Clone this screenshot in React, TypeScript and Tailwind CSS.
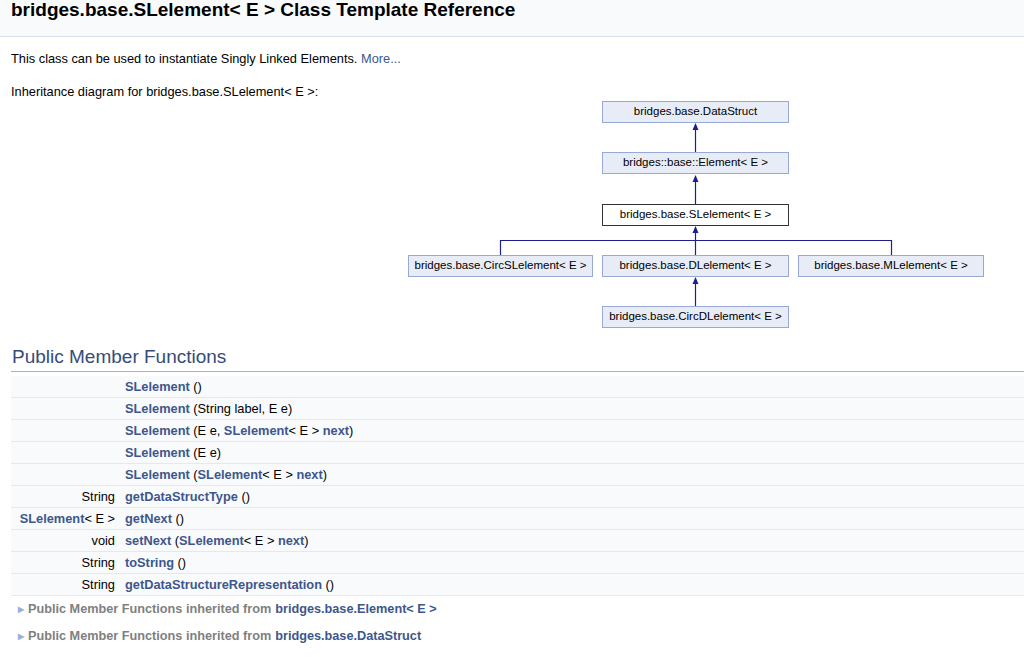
import React from "react";

const L = "text-[#3D578C] font-bold";

type Row = { left: React.ReactNode; right: React.ReactNode };

const rows: Row[] = [
  { left: "", right: (<><span className={L}>SLelement</span> ()</>) },
  { left: "", right: (<><span className={L}>SLelement</span> (String label, E e)</>) },
  { left: "", right: (<><span className={L}>SLelement</span> (E e, <span className={L}>SLelement</span>&lt; E &gt; <span className={L}>next</span>)</>) },
  { left: "", right: (<><span className={L}>SLelement</span> (E e)</>) },
  { left: "", right: (<><span className={L}>SLelement</span> (<span className={L}>SLelement</span>&lt; E &gt; <span className={L}>next</span>)</>) },
  { left: "String", right: (<><span className={L}>getDataStructType</span> ()</>) },
  { left: (<><span className={L}>SLelement</span>&lt; E &gt;</>), right: (<><span className={L}>getNext</span> ()</>) },
  { left: "void", right: (<><span className={L}>setNext</span> (<span className={L}>SLelement</span>&lt; E &gt; <span className={L}>next</span>)</>) },
  { left: "String", right: (<><span className={L}>toString</span> ()</>) },
  { left: "String", right: (<><span className={L}>getDataStructureRepresentation</span> ()</>) },
];

function Box({ x, y, w, label, main }: { x: number; y: number; w: number; label: string; main?: boolean }) {
  return (
    <div
      className={`absolute flex items-center justify-center text-[11.5px] text-black h-[22px] ${
        main ? "bg-white border border-[#333]" : "bg-[#E8ECF6] border border-[#97AAD6]"
      }`}
      style={{ left: x, top: y, width: w }}
    >
      {label}
    </div>
  );
}

function Arrow({ x, y1, y2 }: { x: number; y1: number; y2: number }) {
  return (
    <g>
      <line x1={x} y1={y1 + 4} x2={x} y2={y2} stroke="#1E1E8C" strokeWidth="1.2" />
      <polygon points={`${x},${y1} ${x - 3},${y1 + 7} ${x + 3},${y1 + 7}`} fill="#1E1E8C" />
    </g>
  );
}

export default function App() {
  return (
    <div className="w-[1024px] min-h-[657px] bg-white text-black font-['Liberation_Sans',Arial,sans-serif] overflow-hidden">
      <div className="h-[37px] bg-[#F9FAFC] border-b border-[#D8DFEE] px-[11px]">
        <h1 className="text-[19px] font-bold leading-[20px] pt-0">
          bridges.base.SLelement&lt; E &gt; Class Template Reference
        </h1>
      </div>

      <p className="text-[12.8px] leading-[16px] px-[11px] mt-[14px]">
        This class can be used to instantiate Singly Linked Elements.{" "}
        <span className="text-[#3D578C]">More...</span>
      </p>
      <p className="text-[12.8px] leading-[16px] px-[11px] mt-[17px]">
        Inheritance diagram for bridges.base.SLelement&lt; E &gt;:
      </p>

      <div className="relative h-[252px] mt-[-6px]">
        <svg className="absolute left-0 top-0" width="1024" height="242">
          <Arrow x={695.5} y1={29} y2={58} />
          <Arrow x={695.5} y1={81} y2={110} />
          <Arrow x={695.5} y1={132} y2={147} />
          <line x1={500.5} y1={146.5} x2={891.5} y2={146.5} stroke="#1E1E8C" strokeWidth="1.2" />
          <line x1={500.5} y1={146} x2={500.5} y2={161} stroke="#1E1E8C" strokeWidth="1.2" />
          <line x1={695.5} y1={146} x2={695.5} y2={161} stroke="#1E1E8C" strokeWidth="1.2" />
          <line x1={891.5} y1={146} x2={891.5} y2={161} stroke="#1E1E8C" strokeWidth="1.2" />
          <Arrow x={695.5} y1={183} y2={212} />
        </svg>
        <Box x={602} y={7} w={187} label="bridges.base.DataStruct" />
        <Box x={602} y={58} w={187} label="bridges::base::Element< E >" />
        <Box x={602} y={110} w={187} label="bridges.base.SLelement< E >" main />
        <Box x={408} y={161} w={185} label="bridges.base.CircSLelement< E >" />
        <Box x={602} y={161} w={187} label="bridges.base.DLelement< E >" />
        <Box x={798} y={161} w={186} label="bridges.base.MLelement< E >" />
        <Box x={602} y={212} w={187} label="bridges.base.CircDLelement< E >" />
      </div>

      <div className="ml-[11px]">
        <h2 className="text-[19px] leading-[22px] text-[#354C7B] pl-[1px] border-b border-[#A3B1D2] pb-[3px]">
          Public Member Functions
        </h2>
        <div className="mt-[4px] text-[12.8px]">
          {rows.map((r, i) => (
            <div key={i} className="flex h-[22px] items-center bg-[#F9FAFC] border-b border-[#E3E8F2]">
              <div className="w-[107px] text-right pr-[3px] whitespace-nowrap">{r.left}</div>
              <div className="pl-[7px] whitespace-nowrap">{r.right}</div>
            </div>
          ))}
        </div>
        <div className="mt-[6px] flex flex-col gap-[11px] text-[12.7px] font-bold">
          <div className="flex items-center h-[16px]">
            <span className="text-[#9CAFD4] text-[8px] ml-[7px] mr-[4px]">▶</span>
            <span className="text-[#808080]">Public Member Functions inherited from </span>
            <span className="text-[#3D578C] ml-[4px]">bridges.base.Element&lt; E &gt;</span>
          </div>
          <div className="flex items-center h-[16px]">
            <span className="text-[#9CAFD4] text-[8px] ml-[7px] mr-[4px]">▶</span>
            <span className="text-[#808080]">Public Member Functions inherited from </span>
            <span className="text-[#3D578C] ml-[4px]">bridges.base.DataStruct</span>
          </div>
        </div>
      </div>
    </div>
  );
}
